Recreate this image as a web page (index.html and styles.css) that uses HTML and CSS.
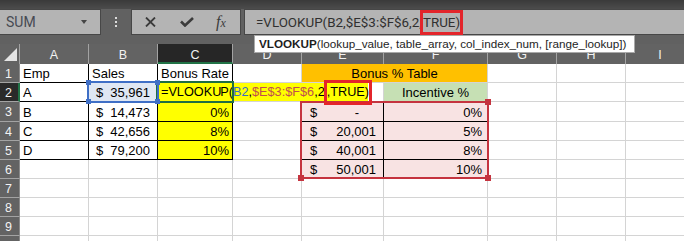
FILE: index.html
```html
<!DOCTYPE html>
<html lang="en">
<head>
<meta charset="utf-8">
<title>VLOOKUP bonus</title>
<link rel="stylesheet" href="styles.css">
</head>
<body>
<div class="app">
  <div class="toolbar">
    <div class="edge"></div>
    <div class="fbar">
      <div class="namebox"><span>SUM</span><span class="drop"></span></div>
      <div class="grip"><i></i><i></i><i></i></div>
      <div class="fbtns">
        <svg class="ic-x" width="11" height="10" viewBox="0 0 11 10"><path d="M1 0.5 L10 9.5 M10 0.5 L1 9.5" stroke="#3b3b3b" stroke-width="1.8" fill="none"/></svg>
        <svg class="ic-ok" width="14" height="10" viewBox="0 0 14 10"><path d="M1 4.5 L5 8.5 L13 1" stroke="#3b3b3b" stroke-width="2.6" fill="none"/></svg>
        <span class="fx">f<span>x</span></span>
      </div>
      <div class="formula">=VLOOKUP(B2,$E$3:$F$6,2,<span class="mark">TRUE)</span></div>
    </div>
  </div>
  <div class="tip"><b>VLOOKUP</b>(lookup_value, table_array, col_index_num, [range_lookup])</div>

  <div class="sheet">
    <div class="corner"><span class="tri"></span></div>
    <div class="ch">A</div><div class="ch">B</div><div class="ch sel">C</div><div class="ch">D</div><div class="ch">E</div><div class="ch">F</div><div class="ch">G</div><div class="ch">H</div><div class="ch">I</div>

    <div class="rh">1</div>
    <div class="c bk">Emp</div><div class="c bk">Sales</div><div class="c bk">Bonus Rate</div><div class="c"></div>
    <div class="c org">Bonus % Table</div>
    <div class="c"></div><div class="c"></div><div class="c"></div>

    <div class="rh sel">2</div>
    <div class="c bk">A</div><div class="c bk acc blue"><span>$</span><span>35,961</span></div><div class="c bk y"></div><div class="c"></div>
    <div class="c"></div><div class="c grn">Incentive %</div>
    <div class="c"></div><div class="c"></div><div class="c"></div>

    <div class="rh">3</div>
    <div class="c bk">B</div><div class="c bk acc"><span>$</span><span>14,473</span></div><div class="c bk y r">0%</div><div class="c"></div>
    <div class="c pk acc e"><span>$</span><span class="dash">-</span></div><div class="c pk r f">0%</div>
    <div class="c"></div><div class="c"></div><div class="c"></div>

    <div class="rh">4</div>
    <div class="c bk">C</div><div class="c bk acc"><span>$</span><span>42,656</span></div><div class="c bk y r">8%</div><div class="c"></div>
    <div class="c pk acc e"><span>$</span><span>20,001</span></div><div class="c pk r f">5%</div>
    <div class="c"></div><div class="c"></div><div class="c"></div>

    <div class="rh">5</div>
    <div class="c bk">D</div><div class="c bk acc"><span>$</span><span>79,200</span></div><div class="c bk y r">10%</div><div class="c"></div>
    <div class="c pk acc e"><span>$</span><span>40,001</span></div><div class="c pk r f">8%</div>
    <div class="c"></div><div class="c"></div><div class="c"></div>

    <div class="rh">6</div>
    <div class="c"></div><div class="c"></div><div class="c"></div><div class="c"></div>
    <div class="c pk acc e"><span>$</span><span>50,001</span></div><div class="c pk r f">10%</div>
    <div class="c"></div><div class="c"></div><div class="c"></div>

    <div class="rh">7</div>
    <div class="c"></div><div class="c"></div><div class="c"></div><div class="c"></div><div class="c"></div><div class="c"></div><div class="c"></div><div class="c"></div><div class="c"></div>
    <div class="rh">8</div>
    <div class="c"></div><div class="c"></div><div class="c"></div><div class="c"></div><div class="c"></div><div class="c"></div><div class="c"></div><div class="c"></div><div class="c"></div>
    <div class="rh">9</div>
    <div class="c"></div><div class="c"></div><div class="c"></div><div class="c"></div><div class="c"></div><div class="c"></div><div class="c"></div><div class="c"></div><div class="c"></div>
    <div class="rh">10</div>
    <div class="c"></div><div class="c"></div><div class="c"></div><div class="c"></div><div class="c"></div><div class="c"></div><div class="c"></div><div class="c"></div><div class="c"></div>

    <!-- overlays -->
    <div class="range-red"><i class="h tr"></i><i class="h bl"></i><i class="h br"></i></div>
    <div class="edit">=VLOOKU<i class="caret"></i>P(<span class="rb">B2</span>,<span class="rr">$E$3:$F$6</span>,2<span class="mark2">,TRUE)</span></div>
    <div class="active"></div>
    <div class="range-blue"><i class="h tl"></i><i class="h tr"></i><i class="h bl"></i><i class="h br"></i></div>
  </div>
</div>
</body>
</html>
```

FILE: styles.css
```css
* { box-sizing: border-box; margin: 0; padding: 0; }
html, body { width: 684px; height: 241px; overflow: hidden; }
body { background: #fff; font-family: "Liberation Sans", Arial, sans-serif; }

.app { position: relative; width: 684px; height: 241px; overflow: hidden; background: #fff; }

/* ---------- formula bar ---------- */
.toolbar { height: 44px; background: #616161; }
.edge { height: 9px; background: linear-gradient(#3a3a3a, #4c4c4c); }
.fbar { display: flex; height: 26px; }

.namebox {
  width: 101px;
  background: #b4b4b4;
  border: 1px solid #474747;
  border-left: 0;
  display: flex;
  align-items: center;
  justify-content: space-between;
  padding: 0 13px 0 6px;
  font-family: Roboto, "Liberation Sans", sans-serif;
  font-size: 14px;
  color: #474a52;
}
.drop {
  width: 0; height: 0;
  border-left: 3.5px solid transparent;
  border-right: 3.5px solid transparent;
  border-top: 4px solid #454545;
}

.grip {
  width: 30px;
  display: flex;
  flex-direction: column;
  align-items: center;
  justify-content: center;
  gap: 2px;
}
.grip i { display: block; width: 2px; height: 2px; background: #dcdcdc; }

.fbtns {
  width: 110px;
  background: #b4b4b4;
  border: 1px solid #474747;
  display: flex;
  align-items: center;
  padding-left: 13px;
}
.ic-x { margin-right: 24px; }
.ic-ok { margin-right: 22px; }
.fx {
  font-family: "Liberation Serif", serif;
  font-style: italic;
  font-size: 16px;
  color: #3b3b3b;
  line-height: 1;
}
.fx span { font-size: 12px; }

.formula {
  flex: 1;
  margin-left: 3px;
  background: #b4b4b4;
  border: 1px solid #474747;
  border-right: 0;
  display: flex;
  align-items: center;
  padding-left: 11px;
  font-family: Roboto, "Liberation Sans", sans-serif;
  font-size: 13.4px;
  color: #303030;
  white-space: nowrap;
}
.mark {
  border: 3px solid #e3252b;
  margin: 0 -3px 0 -2px;
  padding: 2px 0 2px;
}

/* ---------- tooltip ---------- */
.tip {
  position: absolute;
  left: 254px;
  top: 35px;
  width: 381px;
  height: 18px;
  background: #fff;
  border: 1px solid #a9a9a9;
  padding-left: 4px;
  font-size: 11.7px;
  line-height: 16px;
  color: #1e1e1e;
  white-space: nowrap;
  z-index: 10;
}
.tip b { font-weight: bold; }

/* ---------- sheet ---------- */
.sheet {
  position: relative;
  display: grid;
  grid-template-columns: 20px 69px 69px 75px 69px 82px 104px 69px 69px 69px;
  grid-template-rows: 20px 19px 19px 20px 19px 19px 19px 19px 19px 19px 19px;
  font-size: 13px;
  color: #000;
}

.corner { background: #636363; border-right: 1px solid #a3a3a3; position: relative; }
.tri {
  position: absolute;
  left: 4px; top: 4px;
  width: 13px; height: 13px;
  background: #e4e4e4;
  clip-path: polygon(100% 0, 100% 100%, 0 100%);
}

.ch {
  background: #636363;
  border-right: 1px solid #a3a3a3;
  color: #f2f2f2;
  font-size: 12.5px;
  display: flex;
  align-items: center;
  justify-content: center;
  padding-top: 2px;
}
.ch.sel { background: #262626; border-bottom: 2px solid #217346; padding-top: 4px; }

.rh {
  background: #636363;
  border-bottom: 1px solid #a3a3a3;
  border-right: 1px solid #8a8a8a;
  color: #f2f2f2;
  font-size: 12.5px;
  display: flex;
  align-items: center;
  padding-left: 5px;
  padding-top: 1px;
}
.rh.sel { background: #2a2a2a; border-right: 2px solid #217346; }

.c {
  border-right: 1px solid #d4d4d4;
  border-bottom: 1px solid #d4d4d4;
  display: flex;
  align-items: center;
  padding: 1px 3px 0;
  white-space: nowrap;
  line-height: 1;
}
.c.bk { border-right-color: #000; border-bottom-color: #000; }
.c.r { justify-content: flex-end; }
.c.acc { justify-content: space-between; padding-left: 7px; padding-right: 7px; }
.c.acc.e { padding-left: 8px; padding-right: 7px; }
.c.f { padding-right: 5px; }
.dash { margin-right: 17px; }
.c.blue { background: #dfe7f3; }
.c.y { background: #ffff00; }
.c.org { grid-column: span 2; background: #ffc000; justify-content: center; }
.c.grn { background: #c6e0b4; justify-content: center; }
.c.pk { background: #f8e3e3; border-right-color: #000; border-bottom-color: #000; }

/* ---------- overlays ---------- */
.edit {
  position: absolute;
  left: 158px;
  top: 39px;
  width: 210px;
  height: 18px;
  background: #ffff00;
  padding: 1px 0 0 3px;
  display: flex;
  align-items: center;
  white-space: nowrap;
  font-size: 12.7px;
  line-height: 1;
  z-index: 3;
}
.caret { display: inline-block; width: 1px; height: 15px; background: #000; margin-right: -1px; }
.rb { color: #3a6ec6; }
.rr { color: #c0504d; }
.mark2 {
  border: 3px solid #e3252b;
  margin: 0 -3px 0 -1px;
  padding: 3px 0 3px;
}

.active {
  position: absolute;
  left: 156px;
  top: 37px;
  width: 78px;
  height: 22px;
  border: 2px solid #1f6e43;
  z-index: 4;
}

.range-blue {
  position: absolute;
  left: 87px;
  top: 37px;
  width: 72px;
  height: 22px;
  border: 2px solid #3f6fc6;
  z-index: 5;
}
.range-blue .h { position: absolute; width: 5px; height: 5px; background: #3f6fc6; }
.range-blue .tl { left: -3px; top: -3px; }
.range-blue .tr { right: -3px; top: -3px; }
.range-blue .bl { left: -3px; bottom: -3px; }
.range-blue .br { right: -3px; bottom: -3px; }

.range-red {
  position: absolute;
  left: 300px;
  top: 57px;
  width: 189px;
  height: 78px;
  border: 2px solid #c5343f;
  z-index: 2;
}
.range-red .h { position: absolute; width: 6px; height: 6px; background: #c5343f; }
.range-red .tr { right: -4px; top: -4px; }
.range-red .bl { left: -4px; bottom: -4px; }
.range-red .br { right: -4px; bottom: -4px; }
```
